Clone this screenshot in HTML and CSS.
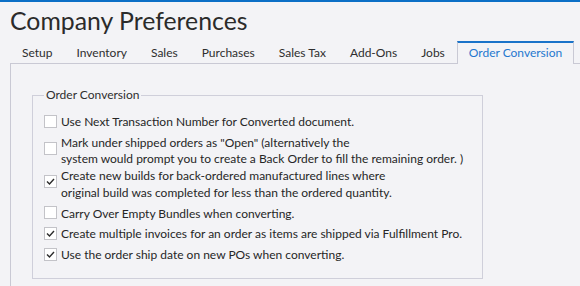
FILE: index.html
```html
<!DOCTYPE html>
<html lang="en">
<head>
    <meta charset="UTF-8">
    <title>Company Preferences</title>
    <link rel="stylesheet" href="styles.css">
</head>
<body>
    <div class="page">
        <div class="accent-bar"></div>
        <h1 class="title">Company Preferences</h1>

        <div class="tabs">
            <div class="tab">Setup</div>
            <div class="tab">Inventory</div>
            <div class="tab">Sales</div>
            <div class="tab">Purchases</div>
            <div class="tab">Sales Tax</div>
            <div class="tab">Add-Ons</div>
            <div class="tab">Jobs</div>
            <div class="tab active">Order Conversion</div>
        </div>

        <div class="panel">
            <fieldset class="group">
                <legend>Order Conversion</legend>
                <div class="options">
                    <label class="opt">
                        <span class="box"></span>
                        <span>Use Next Transaction Number for Converted document.</span>
                    </label>
                    <label class="opt wrap">
                        <span class="box"></span>
                        <span>Mark under shipped orders as "Open" (alternatively the<br>system would prompt you to create a Back Order to fill the remaining order. )</span>
                    </label>
                    <label class="opt wrap snug">
                        <span class="box checked"><svg viewBox="0 0 11 11"><polyline points="2,5.5 4.5,8 9,3"/></svg></span>
                        <span>Create new builds for back-ordered manufactured lines where<br>original build was completed for less than the ordered quantity.</span>
                    </label>
                    <label class="opt">
                        <span class="box"></span>
                        <span>Carry Over Empty Bundles when converting.</span>
                    </label>
                    <label class="opt">
                        <span class="box checked"><svg viewBox="0 0 11 11"><polyline points="2,5.5 4.5,8 9,3"/></svg></span>
                        <span>Create multiple invoices for an order as items are shipped via Fulfillment Pro.</span>
                    </label>
                    <label class="opt">
                        <span class="box checked"><svg viewBox="0 0 11 11"><polyline points="2,5.5 4.5,8 9,3"/></svg></span>
                        <span>Use the order ship date on new POs when converting.</span>
                    </label>
                </div>
            </fieldset>
        </div>
    </div>
</body>
</html>
```
FILE: styles.css
```css
* {
    margin: 0;
    padding: 0;
    box-sizing: border-box;
}

body {
    font-family: 'Lato', 'Open Sans', sans-serif;
    background: #f3f3f6;
    color: #262626;
    overflow: hidden;
}

.page {
    display: flex;
    flex-direction: column;
    height: 100vh;
}

.accent-bar {
    height: 2px;
    background: #0b6fc6;
}

.title {
    font-size: 24.8px;
    font-weight: normal;
    line-height: 28px;
    margin: 5px 0 0 10px;
    color: #2b2b2b;
}

.tabs {
    display: flex;
    margin: 6px 0 -1px 10px;
    position: relative;
    z-index: 1;
}

.tab {
    font-size: 12px;
    line-height: 16px;
    padding: 2px 11px 3px;
    border-top: 2px solid transparent;
    border-left: 1px solid transparent;
    border-right: 1px solid transparent;
    color: #2e2e2e;
}

.tab.active {
    color: #1f78cf;
    border-top-color: #1a73c9;
    border-left-color: #c9c9d4;
    border-right-color: #c9c9d4;
    background: #f3f3f6;
}

.panel {
    flex: 1;
    margin-left: 10px;
    border-top: 1px solid #c9c9d4;
    border-left: 1px solid #c9c9d4;
}

.group {
    width: 451px;
    margin: 23px 0 0 21px;
    padding: 0 0 14px 11px;
    border: 1px solid #cfcfda;
    font-size: 12px;
}

.group legend {
    line-height: 16px;
    padding: 0 2px;
    color: #2e2e2e;
}

.options {
    display: flex;
    flex-direction: column;
    padding-top: 11px;
}

.opt {
    display: flex;
    align-items: center;
    gap: 4px;
    line-height: 16.7px;
    margin-top: 4px;
}

.opt:first-child,
.opt.snug {
    margin-top: 0;
}

.box {
    flex: none;
    width: 13px;
    height: 13px;
    margin-bottom: 2px;
    background: #fff;
    border: 1px solid #c3c3c8;
}

/* two-line options sit their box a little above centre */
.opt.wrap .box {
    margin-bottom: 6px;
}

.box svg {
    display: block;
    width: 11px;
    height: 11px;
}

.box polyline {
    fill: none;
    stroke: #2b2b2b;
    stroke-width: 1.4;
}
```
